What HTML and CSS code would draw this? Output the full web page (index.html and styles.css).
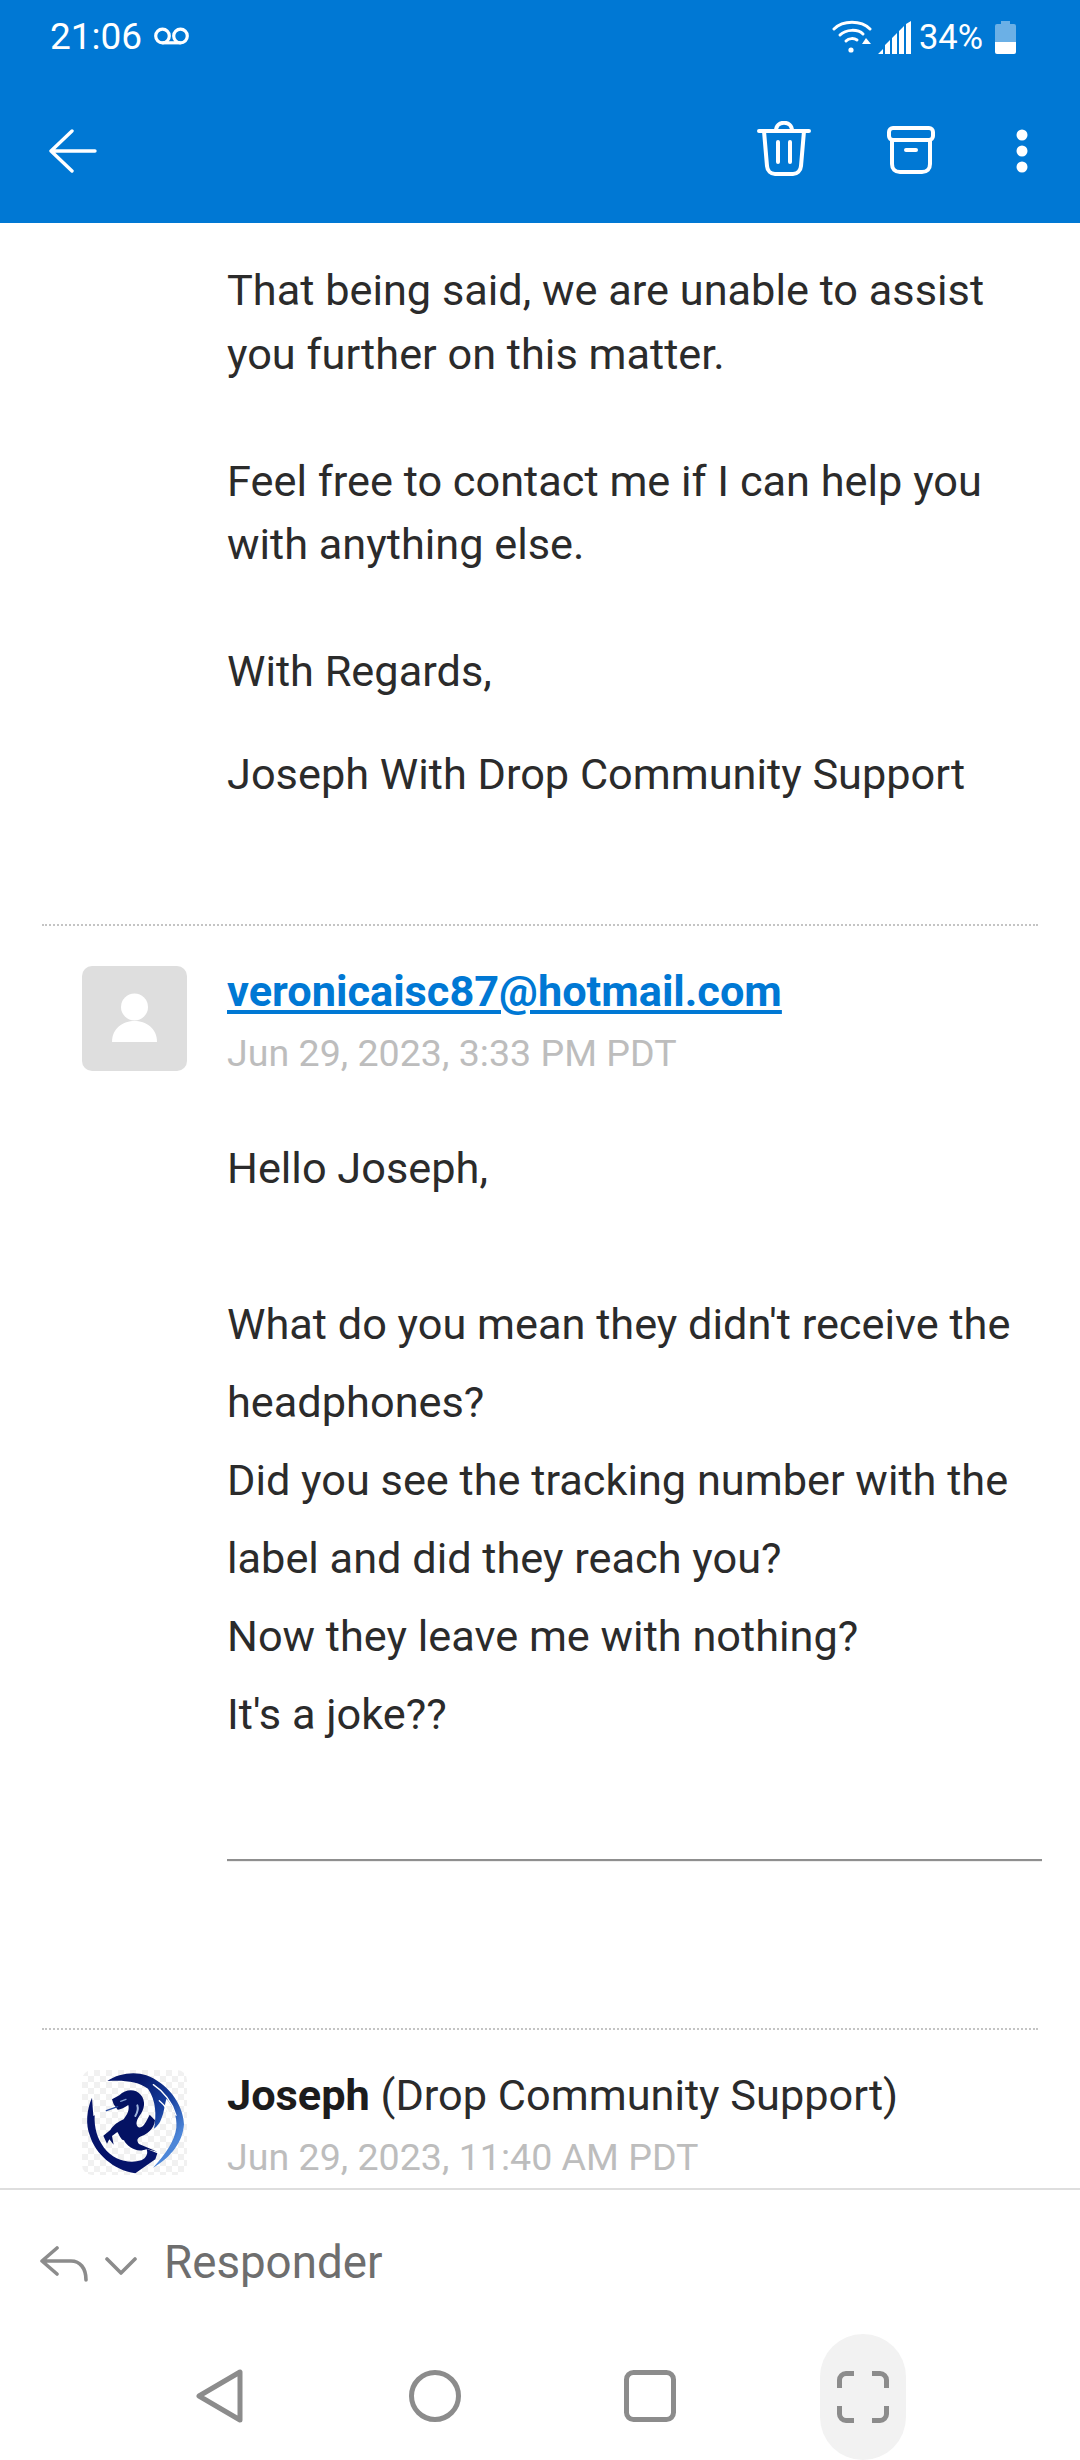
FILE: index.html
```html
<!DOCTYPE html>
<html lang="en">
<head>
<meta charset="utf-8">
<title>Message</title>
<link rel="stylesheet" href="styles.css">
</head>
<body>
<div class="app">
  <header class="top">
    <div class="status">
      <div class="status-left">
        <span class="time">21:06</span>
        <svg class="vm" width="35" height="18" viewBox="0 0 35 18" fill="none" stroke="#fff" stroke-width="3.200"><circle cx="8.500" cy="9" r="6.800"/><circle cx="26.500" cy="9" r="6.800"/><path d="M8.500 15.800h18"/></svg>
      </div>
      <div class="status-right">
        <svg width="40" height="34" viewBox="0 0 40 34" fill="none" stroke="#fff" stroke-linecap="round"><path d="M2 9C11 0 29 0 38 9" stroke-width="3"/><path d="M8 15C14 9 26 9 31 14" stroke-width="3"/><path d="M14 21c3-3 8-3 11-1" stroke-width="3"/><circle cx="19" cy="30" r="2.600" fill="#fff" stroke="none"/><path d="M30 24l4-6 5 6z" fill="#fff" stroke="none"/></svg>
        <svg class="sig" width="33" height="33" viewBox="0 0 33 33" fill="#fff"><path d="M0 33l5-5v5zM7 33v-9l5-5v14zM14 33V17l5-5v21zM21 33V10l5-5v28zM28 33V3l5-3v33z"/></svg>
        <span class="pct">34%</span>
        <svg width="21" height="33" viewBox="0 0 21 33"><path d="M6 0h9v3h4a2 2 0 0 1 2 2v8H0V5a2 2 0 0 1 2-2h4z" fill="#fff" opacity=".42"/><path d="M0 21h21v10a2 2 0 0 1-2 2H2a2 2 0 0 1-2-2z" fill="#fff"/><path d="M0 13h21v8H0z" fill="#fff" opacity=".42"/></svg>
      </div>
    </div>
    <div class="toolbar">
      <svg class="back" width="48" height="44" viewBox="0 0 48 44" fill="none" stroke="#fff" stroke-width="3.400" stroke-linecap="round" stroke-linejoin="round"><path d="M46 22H2M23 2L2 22l21 20"/></svg>
      <div class="actions">
        <svg class="ic-trash" width="54" height="55" viewBox="0 0 54 55" fill="none" stroke="#fff" stroke-width="4" stroke-linecap="round" stroke-linejoin="round"><path d="M2 10h50M19 10c0-11 16-11 16 0M7 10l3 35c.4 5 4 8 8 8h18c4 0 7.600-3 8-8l3-35M21 21v20M33 21v20"/></svg>
        <svg class="ic-box" width="48" height="48" viewBox="0 0 48 48" fill="none" stroke="#fff" stroke-width="4" stroke-linecap="round" stroke-linejoin="round"><rect x="2" y="2" width="44" height="12" rx="4"/><path d="M5 14v24c0 5 3 8 8 8h22c5 0 8-3 8-8V14M19 24h10"/></svg>
        <svg class="ic-more" width="12" height="44" viewBox="0 0 12 44" fill="#fff"><circle cx="6" cy="6" r="5.500"/><circle cx="6" cy="22" r="5.500"/><circle cx="6" cy="38" r="5.500"/></svg>
      </div>
    </div>
  </header>

  <main class="thread">
    <section class="body-a">
      <p>That being said, we are unable to assist<br>you further on this matter.</p>
      <p>Feel free to contact me if I can help you<br>with anything else.</p>
      <p>With Regards,</p>
      <p class="sign">Joseph With Drop Community Support</p>
    </section>

    <section class="msg msg-one">
      <div class="msg-head">
        <div class="avatar">
          <svg width="105" height="105" viewBox="0 0 105 105" fill="#fff"><circle cx="52.500" cy="41" r="13.500"/><path d="M30 76c0-28 45-28 45 0z"/></svg>
        </div>
        <div class="meta">
          <a class="who link">veronicaisc87@hotmail.com</a>
          <div class="when">Jun 29, 2023, 3:33 PM PDT</div>
        </div>
      </div>
      <div class="body-b">
        <p>Hello Joseph,</p>
        <p class="blank">&nbsp;</p>
        <p>What do you mean they didn't receive the</p>
        <p>headphones?</p>
        <p>Did you see the tracking number with the</p>
        <p>label and did they reach you?</p>
        <p>Now they leave me with nothing?</p>
        <p>It's a joke??</p>
      </div>
      <div class="rule"></div>
    </section>

    <section class="msg msg-two">
      <div class="msg-head">
        <div class="avatar logo">
          <svg width="105" height="105" viewBox="12 12 315 315">
            <defs>
              <pattern id="chk" x="12" y="12" width="36" height="36" patternUnits="userSpaceOnUse"><rect x="0" y="0" width="18" height="18" fill="#f1f1f1"/><rect x="18" y="18" width="18" height="18" fill="#f1f1f1"/></pattern>
              <linearGradient id="wing" gradientUnits="userSpaceOnUse" x1="170" y1="60" x2="325" y2="180"><stop offset="0" stop-color="#06176a"/><stop offset=".55" stop-color="#17409f"/><stop offset="1" stop-color="#4d86d8"/></linearGradient>
            </defs>
            <rect x="12" y="12" width="315" height="315" fill="url(#chk)"/>
            <path d="M42 95C26 130 22 175 36 210c16 52 69 102 136 112l60-42 6-18-33-14c7 14 0 27-15 35-40 12-85-3-112-38-20-27-30-60-28-97l-4 2z" fill="#06146a"/>
            <path d="M88 45c32-23 82-30 117-17 60 22 110 82 113 147-3 50-38 100-93 130 37-40 65-80 70-120 3-35-10-65-30-87-6 20-6 40-15 60-4 12-12 22-22 30 8-40 6-85-18-120-30-22-70-26-122-23z" fill="url(#wing)"/>
            <path d="M226 56c30 20 56 52 68 92" fill="none" stroke="#fff" stroke-width="4" stroke-linecap="round"/>
            <path d="M244 104c18 14 32 38 36 64" fill="none" stroke="#fff" stroke-width="4" stroke-linecap="round"/>
            <path d="M102 100l22-12c20-20 48-20 64-2 16 18 12 44-4 64-9 14-12 26-3 34 14 4 24-18 34-38l16 17c-3 27-24 42-40 47-14 5-16 14-8 24l55 23-32-8c-27 13-58-5-68-26-10-1-15-19-20-25l-16 12 5 26-13-16-7 13-11-24 21-17c10-16 23-24 40-32 10-14 18-27 14-43-6 3-20 14-32 14l-12-16z" fill="#041263"/>
            <path d="M85 134l34-12" fill="none" stroke="#2a4c9f" stroke-width="4" stroke-linecap="round"/>
            <path d="M128 106l16-6" fill="none" stroke="#7f9bd0" stroke-width="4" stroke-linecap="round"/>
            <path d="M178 118c4 12 0 22-6 32" fill="none" stroke="#9fb4dc" stroke-width="6" stroke-linecap="round"/>
          </svg>
        </div>
        <div class="meta">
          <div class="who"><b>Joseph</b> (Drop Community Support)</div>
          <div class="when">Jun 29, 2023, 11:40 AM PDT</div>
        </div>
      </div>
    </section>
  </main>

  <footer class="reply">
    <svg class="ic-reply" width="48" height="36" viewBox="0 0 48 36" fill="none" stroke="#8c8c8c" stroke-width="3.600" stroke-linecap="round" stroke-linejoin="round"><path d="M17 2L2 15l15 13M2 15h29c9 0 15 7 15 19"/></svg>
    <svg class="ic-chev" width="32" height="18" viewBox="0 0 32 18" fill="none" stroke="#8c8c8c" stroke-width="3.600" stroke-linecap="round" stroke-linejoin="round"><path d="M2 2l14 14L30 2"/></svg>
    <span class="reply-label">Responder</span>
  </footer>

  <nav class="nav">
    <div class="nav-slot"><svg width="48" height="54" viewBox="0 0 48 54" fill="none" stroke="#8c8c8c" stroke-width="5" stroke-linejoin="round"><path d="M44 3v48L3 27z"/></svg></div>
    <div class="nav-slot"><svg width="52" height="52" viewBox="0 0 52 52" fill="none" stroke="#8c8c8c" stroke-width="5"><circle cx="26" cy="26" r="23.500"/></svg></div>
    <div class="nav-slot"><svg width="52" height="52" viewBox="0 0 52 52" fill="none" stroke="#8c8c8c" stroke-width="5"><rect x="2.500" y="2.500" width="47" height="47" rx="7"/></svg></div>
    <div class="nav-pill"><svg width="52" height="52" viewBox="0 0 52 52" fill="none" stroke="#8c8c8c" stroke-width="5"><path d="M2.500 17V9a6.500 6.500 0 0 1 6.500-6.500h8M35 2.500h8A6.500 6.500 0 0 1 49.500 9v8M2.500 35v8A6.500 6.500 0 0 0 9 49.500h8M35 49.500h8a6.500 6.500 0 0 0 6.500-6.500v-8"/></svg></div>
  </nav>
</div>
</body>
</html>
```
FILE: styles.css
```css
* { box-sizing: border-box; }
html, body { margin: 0; padding: 0; background: #fff; }
body { font-family: Roboto, "Noto Sans", sans-serif; color: #2b2b2b; }
p { margin: 0; }

.app { width: 1080px; height: 2460px; display: flex; flex-direction: column; overflow: hidden; }

.top { height: 223px; background: #0078d4; color: #fff; flex: none; }
.status { height: 74px; padding: 0 64px 0 50px; display: flex; justify-content: space-between; align-items: center; }
.status-left { display: flex; align-items: center; gap: 12px; }
.time { font-size: 37px; line-height: 74px; }
.vm { margin-top: -2px; }
.status-right { display: flex; align-items: center; margin-top: 0; }
.sig { margin-left: 6px; }
.pct { font-size: 34.500px; line-height: 40px; margin: 0 12px 0 8px; }

.toolbar { height: 149px; padding: 0 52px 0 49px; display: flex; justify-content: space-between; align-items: center; }
.back { margin-top: 5px; }
.actions { display: flex; align-items: center; margin-top: 2px; }
.ic-trash { margin-right: 76px; margin-top: -3px; }
.ic-box { margin-right: 81px; }
.ic-more { margin-top: 3px; }

.thread { flex: 1; min-height: 0; overflow: hidden; }

.body-a { padding: 36px 0 0 227px; font-size: 43.300px; line-height: 63.500px; }
.body-a p { margin-bottom: 63.500px; }
.body-a p:nth-child(3) { margin-bottom: 39px; }
.body-a p.sign { margin-bottom: 0; }

.msg { margin: 0 42px; border-top: 2px dotted #c4c4c4; }
.msg-one { margin-top: 118px; padding-top: 40px; height: 1104px; }
.msg-two { padding-top: 40px; }

.msg-head { display: flex; padding-left: 40px; }
.avatar { width: 105px; height: 105px; border-radius: 10px; background: #dedede; overflow: hidden; flex: none; }
.logo { background: #fff; }
.avatar svg { display: block; }
.meta { margin-left: 40px; white-space: nowrap; }
.who { font-size: 43.300px; line-height: 52px; margin-top: 0; }
.who b { font-weight: 700; color: #1c1c1c; }
.link { display: block; color: #0078d4; font-weight: 700; text-decoration: underline; text-decoration-thickness: 4px; text-underline-offset: 4px; }
.when { font-size: 37.600px; line-height: 44px; margin-top: 13px; color: #bdbdbd; }

.body-b { margin: 55px 0 0 185px; font-size: 43.300px; line-height: 78px; white-space: nowrap; }
.blank { height: 78px; }
.rule { margin: 105px -4px 0 185px; height: 3px; border-top: 2px solid #8f8f8f; border-bottom: 1px solid #eee; }

.reply { height: 146px; flex: none; border-top: 2px solid #dedede; display: flex; align-items: center; padding: 0 0 0 40px; }
.ic-reply { flex: none; margin-top: 3px; }
.ic-chev { margin-left: 17px; margin-top: 7px; flex: none; }
.reply-label { margin-left: 27px; font-size: 45.700px; color: #6e6e6e; }

.nav { height: 126px; flex: none; position: relative; display: flex; align-items: flex-start; padding: 35px 0 0 194px; }
.nav-slot { width: 52px; height: 54px; margin-right: 163px; display: flex; align-items: center; justify-content: center; }
.nav-slot svg { display: block; }
.nav-pill { position: absolute; left: 820px; top: 0; width: 86px; height: 126px; border-radius: 43px; background: #f2f2f2; display: flex; align-items: center; justify-content: center; }
```
